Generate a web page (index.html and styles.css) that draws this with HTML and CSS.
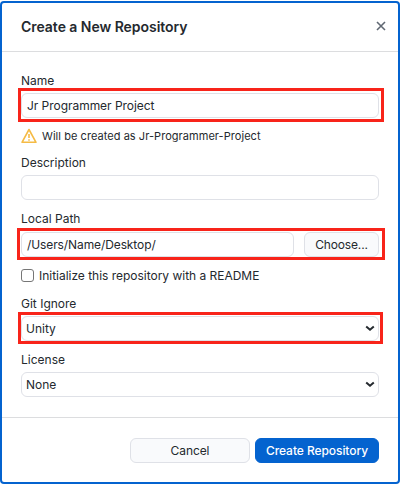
FILE: index.html
```html
<!DOCTYPE html>
<html lang="en">
<head>
<meta charset="utf-8">
<title>Create a New Repository</title>
<link rel="stylesheet" href="styles.css">
</head>
<body>
<main class="dialog">
  <header class="dialog-header">
    <h1 class="title">Create a New Repository</h1>
    <svg class="close" viewBox="0 0 10 10" aria-label="Close"><path d="M1 1 9 9M9 1 1 9"/></svg>
  </header>
  <form class="content">
    <div class="label">Name</div>
    <div class="row highlight highlight-name"><div class="control name-text">Jr Programmer Project</div></div>
    <div class="warning">
      <svg class="warning-icon" viewBox="0 0 16 16"><path d="M8 1.5 15 14.3H1Z"/><path d="M8 6v4M8 11.2v1.6"/></svg>
      <span>Will be created as Jr-Programmer-Project</span>
    </div>
    <div class="label">Description</div>
    <div class="row"><div class="control"></div></div>
    <div class="label label-path">Local Path</div>
    <div class="row highlight highlight-path">
      <div class="control path-text">/Users/Name/Desktop/</div>
      <div class="button choose">Choose...</div>
    </div>
    <div class="check"><span class="box"></span><span>Initialize this repository with a README</span></div>
    <div class="label">Git Ignore</div>
    <div class="row highlight highlight-ignore"><div class="control select"><span>Unity</span><svg class="chevron" viewBox="0 0 10 7"><path d="M1.2 1.5 5 4.8 8.8 1.5"/></svg></div></div>
    <div class="label label-license">License</div>
    <div class="row"><div class="control select"><span>None</span><svg class="chevron" viewBox="0 0 10 7"><path d="M1.2 1.5 5 4.8 8.8 1.5"/></svg></div></div>
  </form>
  <footer class="dialog-footer">
    <div class="button cancel">Cancel</div>
    <div class="button primary">Create Repository</div>
  </footer>
</main>
</body>
</html>
```
FILE: styles.css
```css
* { box-sizing: border-box; }
body {
  margin: 0;
  padding-top: 1px;
  height: 485px;
  overflow: hidden;
  background: #fff;
  color: #24292e;
  font: 12px/16px Inter, "Liberation Sans", sans-serif;
  white-space: nowrap;
}
.dialog {
  height: 483px;
  border: 2px solid #0463cf;
  border-radius: 4px;
  background: #fff;
}
.dialog-header {
  height: 49px;
  display: flex;
  align-items: center;
  justify-content: space-between;
  padding: 0 12px 0 19px;
  border-bottom: 1px solid #dcdddf;
}
.title { margin: 0; font-size: 14px; line-height: 18px; font-weight: 600; letter-spacing: -0.04px; }
.close { width: 10px; height: 10px; margin-top: -2px; fill: none; stroke: #606873; stroke-width: 1.6; }
.content { height: 365px; padding: 19px 19px 0; }
.label { height: 22px; padding-top: 2px; }
.row { position: relative; display: flex; gap: 10px; height: 25px; }
.control {
  flex: 1;
  height: 25px;
  border: 1px solid #dfe1e7;
  border-radius: 6px;
  padding: 0 5px;
  line-height: 24px;
}
.name-text { letter-spacing: -0.04px; }
.path-text { letter-spacing: -0.1px; }
.highlight::after {
  content: "";
  position: absolute;
  border: 3px solid #f8241a;
}
.highlight-name::after { inset: -5px -5px -4px -3px; }
.highlight-path::after { inset: -4px -6px -3px -4px; }
.highlight-ignore::after { inset: -4px -4px -3px -3px; }
.warning {
  display: flex;
  align-items: center;
  gap: 5px;
  height: 35px;
  font-size: 11px;
  letter-spacing: 0.05px;
}
.warning-icon { width: 16px; height: 16px; fill: none; stroke: #f5bb45; stroke-width: 1.6; stroke-linejoin: round; }
.label-path { height: 32px; padding-top: 11px; }
.check { display: flex; align-items: center; gap: 5px; height: 37px; letter-spacing: -0.02px; }
.box { width: 13px; height: 13px; border: 1px solid #767676; border-radius: 3px; }
.select { display: flex; justify-content: space-between; padding: 0 3px 0 4px; line-height: 24px; }
.chevron { width: 10px; height: 7px; margin-top: 8px; fill: none; stroke: #24292e; stroke-width: 2; }
.label-license { height: 31px; padding-top: 11px; }
.button {
  height: 25px;
  border: 1px solid #dfe1e7;
  border-radius: 6px;
  background: #f9fafc;
  text-align: center;
  line-height: 24px;
}
.choose { width: 75px; letter-spacing: -0.15px; }
.dialog-footer {
  height: 65px;
  display: flex;
  justify-content: flex-end;
  gap: 5px;
  padding: 20px 19px 0;
  border-top: 1px solid #dcdddf;
}
.cancel { width: 120px; letter-spacing: -0.1px; }
.primary { width: 124px; border-color: #0463cf; background: #0463cf; color: #fff; font-weight: 500; letter-spacing: -0.06px; }
```
